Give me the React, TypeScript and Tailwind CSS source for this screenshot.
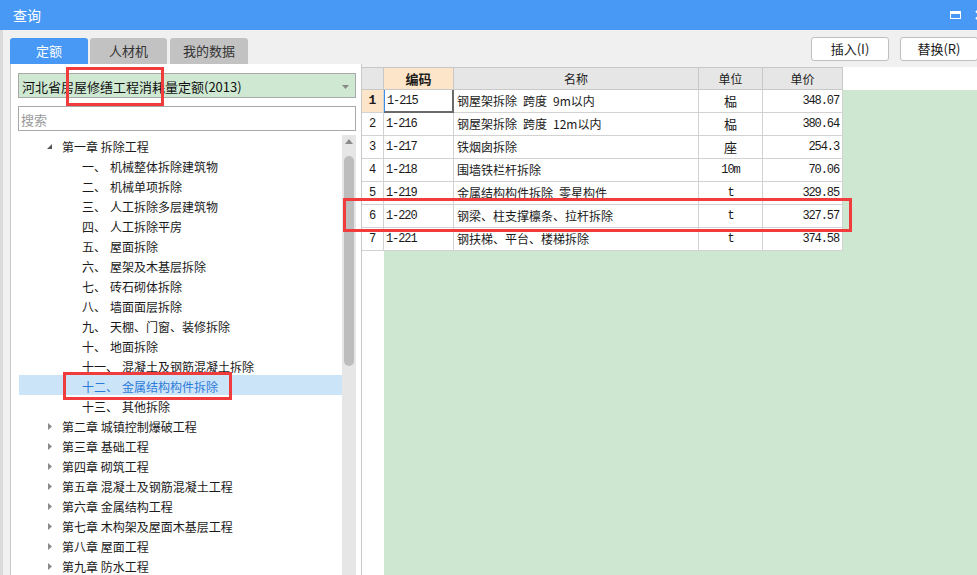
import React from "react"

const cjk = "font-['Microsoft_YaHei','Noto_Sans_CJK_SC',sans-serif]"
const mono = "font-['Liberation_Mono','Noto_Sans_CJK_SC',monospace]"

type TreeRow = { kind: "chapter" | "section"; label: string; num?: string; open?: boolean; selected?: boolean }

const tree: TreeRow[] = [
  { kind: "chapter", label: "第一章 拆除工程", open: true },
  { kind: "section", num: "一、", label: "机械整体拆除建筑物" },
  { kind: "section", num: "二、", label: "机械单项拆除" },
  { kind: "section", num: "三、", label: "人工拆除多层建筑物" },
  { kind: "section", num: "四、", label: "人工拆除平房" },
  { kind: "section", num: "五、", label: "屋面拆除" },
  { kind: "section", num: "六、", label: "屋架及木基层拆除" },
  { kind: "section", num: "七、", label: "砖石砌体拆除" },
  { kind: "section", num: "八、", label: "墙面面层拆除" },
  { kind: "section", num: "九、", label: "天棚、门窗、装修拆除" },
  { kind: "section", num: "十、", label: "地面拆除" },
  { kind: "section", num: "十一、", label: "混凝土及钢筋混凝土拆除" },
  { kind: "section", num: "十二、", label: "金属结构构件拆除", selected: true },
  { kind: "section", num: "十三、", label: "其他拆除" },
  { kind: "chapter", label: "第二章 城镇控制爆破工程" },
  { kind: "chapter", label: "第三章 基础工程" },
  { kind: "chapter", label: "第四章 砌筑工程" },
  { kind: "chapter", label: "第五章 混凝土及钢筋混凝土工程" },
  { kind: "chapter", label: "第六章 金属结构工程" },
  { kind: "chapter", label: "第七章 木构架及屋面木基层工程" },
  { kind: "chapter", label: "第八章 屋面工程" },
  { kind: "chapter", label: "第九章 防水工程" },
]

const rows = [
  { code: "1-215", name: ["钢屋架拆除", "跨度", "9m以内"], unit: "榀", price: "348.07" },
  { code: "1-216", name: ["钢屋架拆除", "跨度", "12m以内"], unit: "榀", price: "380.64" },
  { code: "1-217", name: ["铁烟囱拆除"], unit: "座", price: "254.3" },
  { code: "1-218", name: ["围墙铁栏杆拆除"], unit: "10m", price: "70.06" },
  { code: "1-219", name: ["金属结构构件拆除", "零星构件"], unit: "t", price: "329.85" },
  { code: "1-220", name: ["钢梁、柱支撑檩条、拉杆拆除"], unit: "t", price: "327.57" },
  { code: "1-221", name: ["钢扶梯、平台、楼梯拆除"], unit: "t", price: "374.58" },
]

function Tri({ open }: { open?: boolean }) {
  if (open)
    return (
      <svg width="7" height="7" viewBox="0 0 7 7" className="shrink-0">
        <path d="M6 1 L6 6 L1 6 Z" fill="#555" />
      </svg>
    )
  return (
    <svg width="6" height="9" viewBox="0 0 6 9" className="shrink-0">
      <path d="M1 1 L5 4.5 L1 8 Z" fill="#8a8a8a" />
    </svg>
  )
}

export default function App() {
  return (
    <div className={`relative w-[977px] h-[575px] overflow-hidden bg-[#f0f0f0] text-[#1a1a1a] ${cjk}`}>
      {/* title bar */}
      <div className="h-[30px] bg-[#4799f5] flex items-center justify-between pl-[13px] text-white text-[14px]">
        <span>查询</span>
        <div className="flex items-center gap-[14px] -mr-[8px]">
          <div className="w-[11px] h-[8px] border border-white border-t-[3px]" />
          <svg width="10" height="10" viewBox="0 0 10 10">
            <path d="M1 1 L9 9 M9 1 L1 9" stroke="#fff" strokeWidth="2" />
          </svg>
        </div>
      </div>

      <div className="flex h-[545px] border-l-[3px] border-[#dadada]">
        {/* left side */}
        <div className="w-[359px] flex flex-col">
          <div className="h-[36px] flex items-end pl-[7px] gap-[2px] text-[13px]">
            <div className="w-[78px] h-[26px] rounded-t-[3px] bg-[#4799f5] text-white flex items-center justify-center">定额</div>
            <div className="w-[77px] h-[26px] rounded-t-[3px] bg-[#c2c2c2] text-[#333] flex items-center justify-center">人材机</div>
            <div className="w-[78px] h-[26px] rounded-t-[3px] bg-[#c2c2c2] text-[#333] flex items-center justify-center ml-[1px]">我的数据</div>
          </div>
          <div className="flex-1 ml-[7px] bg-white border-l border-r border-[#c8c8c8] flex flex-col pt-[9px] pl-[7px] pr-[5px]">
            <div className="h-[25px] bg-[#cfe8d2] border border-[#a9a9a9] flex items-center justify-between pl-[3px] pr-[6px] pt-[2px] text-[13px] text-[#111]">
              <span>河北省房屋修缮工程消耗量定额(2013)</span>
              <svg width="7" height="4" viewBox="0 0 7 4">
                <path d="M0 0 L7 0 L3.5 4 Z" fill="#888" />
              </svg>
            </div>
            <div className="mt-[8px] h-[25px] border border-[#a9a9a9] flex items-center pl-[2px] pt-[2px] text-[13px] text-[#9a9a9a]">搜索</div>
            <div className="mt-[4px] flex flex-1 min-h-0">
              <div className="flex-1 pl-[1px] flex flex-col text-[12px]">
                {tree.map((r, i) => (
                  <div
                    key={i}
                    className={`h-[20px] shrink-0 flex items-center pt-[3px] ${r.selected ? "bg-[#cce4f8] text-[#2c7bd8]" : ""}`}
                  >
                    {r.kind === "chapter" ? (
                      <>
                        <div className="w-[43px] flex justify-end pr-[9px]">
                          <Tri open={r.open} />
                        </div>
                        <span>{r.label}</span>
                      </>
                    ) : (
                      <>
                        <div className="w-[63px]" />
                        <span className="mr-[4px]">{r.num}</span>
                        <span>{r.label}</span>
                      </>
                    )}
                  </div>
                ))}
              </div>
              <div className="w-[14px] bg-[#e6e6e6] flex flex-col items-center">
                <svg width="8" height="5" viewBox="0 0 8 5" className="mt-[4px]">
                  <path d="M0 5 L8 5 L4 0 Z" fill="#8c8c8c" />
                </svg>
                <div className="mt-[12px] w-[10px] h-[210px] rounded-[5px] bg-[#bdbdbd]" />
              </div>
            </div>
          </div>
        </div>

        {/* right side */}
        <div className="flex-1 flex flex-col">
          <div className="h-[37px] flex justify-end gap-[11px] pt-[7px] -mr-[1px] text-[13px]">
            <div className="w-[78px] h-[24px] bg-white border border-[#bfbfbf] rounded-[3px] flex items-center justify-center">插入(I)</div>
            <div className="w-[78px] h-[24px] bg-white border border-[#bfbfbf] rounded-[3px] flex items-center justify-center">替换(R)</div>
          </div>
          <div className="flex-1 flex flex-col bg-[#cde7d0] text-[12px]">
            {/* header */}
            <div className="h-[23px] flex bg-white">
              <div className="w-[22px] h-full bg-[#e6e6e6] border-t border-r border-b border-[#c8c8c8]" />
              <div className="w-[70px] h-full bg-[#fde5c9] border-t border-r border-b border-[#c8c8c8] flex items-center justify-center font-bold text-[13px]">编码</div>
              <div className="w-[245px] h-full bg-[#e6e6e6] border-t border-r border-b border-[#c8c8c8] flex items-center justify-center">名称</div>
              <div className="w-[64px] h-full bg-[#e6e6e6] border-t border-r border-b border-[#c8c8c8] flex items-center justify-center">单位</div>
              <div className="w-[80px] h-full bg-[#e6e6e6] border-t border-r border-b border-[#c8c8c8] flex items-center justify-center">单价</div>
              <div className="flex-1" />
            </div>
            {rows.map((r, i) => (
              <div key={r.code} className="h-[23px] flex">
                <div
                  className={`w-[22px] h-full border-r border-b border-[#d2d2d2] flex items-center justify-center ${mono} ${
                    i === 0 ? "bg-[#fde5c9] font-bold text-[13px]" : "bg-white text-[12px]"
                  }`}
                >
                  {i + 1}
                </div>
                <div
                  className={`w-[70px] h-full bg-white flex items-center pl-[2px] ${mono} text-[12px] tracking-[-1.1px] ${
                    i === 0
                      ? "border-l border-l-[#3c8fe8] border-r-2 border-r-[#6a6a6a] border-b-2 border-b-[#6a6a6a]"
                      : "border-r border-b border-[#d2d2d2]"
                  }`}
                >
                  {r.code}
                </div>
                <div className="w-[245px] h-full bg-white border-r border-b border-[#d2d2d2] flex items-center gap-[6px] pl-[3px]">
                  {r.name.map((n, k) => (
                    <span key={k}>{n}</span>
                  ))}
                </div>
                <div className="w-[64px] h-full bg-white border-r border-b border-[#d2d2d2] flex items-center justify-center">
                  {r.unit === "10m" || r.unit === "t" ? (
                    <span className={`${mono} text-[12px] tracking-[-1.1px]`}>{r.unit}</span>
                  ) : (
                    <span className="text-[13px]">{r.unit}</span>
                  )}
                </div>
                <div className={`w-[80px] h-full bg-white border-r border-b border-[#d2d2d2] flex items-center justify-end pr-[3px] ${mono} text-[12px] tracking-[-1.1px]`}>
                  {r.price}
                </div>
                <div className="flex-1" />
              </div>
            ))}
            <div className="flex-1 flex">
              <div className="w-[22px] bg-white" />
              <div className="flex-1" />
            </div>
          </div>
        </div>
      </div>

      {/* red annotation boxes */}
      <div className="absolute left-[66px] top-[67px] w-[98px] h-[39px] border-[3px] border-[#f03c3c]" />
      <div className="absolute left-[63px] top-[372px] w-[169px] h-[28px] border-[3px] border-[#f03c3c]" />
      <div className="absolute left-[343px] top-[198px] w-[509px] h-[34px] border-[3px] border-[#f03c3c]" />
    </div>
  )
}
